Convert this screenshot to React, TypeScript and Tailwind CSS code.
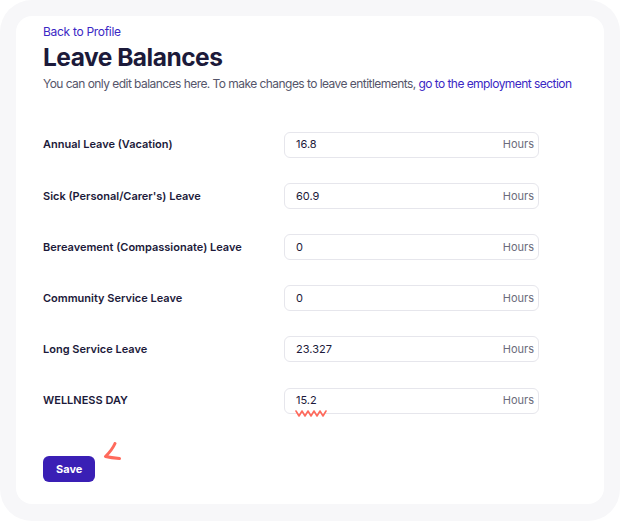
const rows = [
  { label: "Annual Leave (Vacation)", value: "16.8" },
  { label: "Sick (Personal/Carer's) Leave", value: "60.9" },
  { label: "Bereavement (Compassionate) Leave", value: "0" },
  { label: "Community Service Leave", value: "0" },
  { label: "Long Service Leave", value: "23.327" },
  { label: "WELLNESS DAY", value: "15.2", flagged: true },
];

export default function App() {
  return (
    <div className="h-[521px] w-[620px] bg-white font-['Inter',sans-serif]">
      <div className="h-full rounded-[32px] bg-[#f7f7f9] px-4 pt-4 pb-[17px]">
        <div className="h-full rounded-2xl bg-white pl-[27px] pr-6 pt-[9px]">
          <a href="#" className="block text-[12px] leading-[14px] tracking-[-0.3px] text-[#3b27c4]">
            Back to Profile
          </a>
          <h1 className="mt-[3px] text-[24.5px] font-bold leading-[30px] tracking-[-0.5px] text-[#1c1a3a]">
            Leave Balances
          </h1>
          <p className="mt-[4px] whitespace-nowrap text-[12px] leading-[16px] tracking-[-0.55px] text-[#55556a]">
            You can only edit balances here. To make changes to leave entitlements,{" "}
            <a href="#" className="text-[#3b27c4]">go to the employment section</a>
          </p>

          <div className="mt-[27px] flex flex-col">
            {rows.map((r) => (
              <div key={r.label} className="flex h-[51.2px] items-center">
                <span className="w-[241px] text-[11px] font-semibold text-[#1c1a3a]">{r.label}</span>
                <div className="relative flex h-[26px] w-[255px] items-center rounded-md border border-[#e6e6ec] bg-white pl-[11px] pr-[4px]">
                  <span className="flex-1 text-[11px] text-[#1c1a3a]">{r.value}</span>
                  <span className="text-[11px] text-[#6b6b7b]">Hours</span>
                  {r.flagged && (
                    <svg className="absolute left-[10px] top-[20px]" width="32" height="9" viewBox="0 0 32 9">
                      <path
                        d="M1 2 L4 7 L7 2 L10 7 L13 2 L16 7 L19 2 L22 7 L25 2 L28 7 L31 2"
                        fill="none"
                        stroke="#ff6a5c"
                        strokeWidth="1.6"
                        strokeLinecap="round"
                        strokeLinejoin="round"
                      />
                    </svg>
                  )}
                </div>
              </div>
            ))}
          </div>

          <div className="relative mt-[29px] w-fit">
            <button className="h-[26px] rounded-md bg-[#3a1fb5] px-[13px] text-[11px] font-bold text-white">
              Save
            </button>
            <svg className="absolute left-[58px] top-[-13px]" width="22" height="22" viewBox="0 0 22 22">
              <path
                d="M14 1.5 C12 6 9 10 4.5 14.5 C9 15.5 13 16 18.5 16.5"
                fill="none"
                stroke="#ff6a5c"
                strokeWidth="3"
                strokeLinecap="round"
                strokeLinejoin="round"
              />
            </svg>
          </div>
        </div>
      </div>
    </div>
  );
}
